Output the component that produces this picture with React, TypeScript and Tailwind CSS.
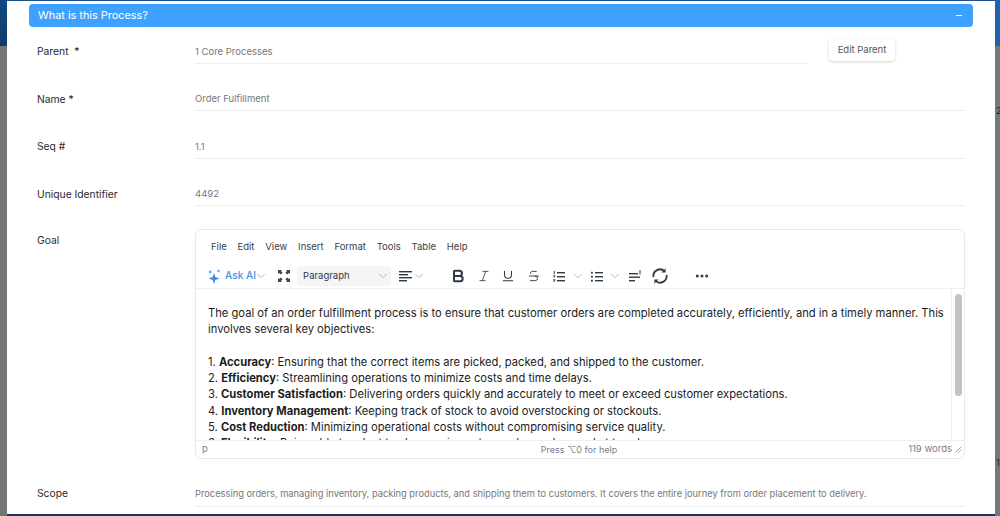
import {
  Bold,
  ChevronDown,
  Ellipsis,
  Italic,
  Strikethrough,
  Underline,
} from "lucide-react";

const menuItems = ["File", "Edit", "View", "Insert", "Format", "Tools", "Table", "Help"];

const Sparkle = () => (
  <svg width="14" height="15" viewBox="0 0 14 15" fill="#3f8fe8">
    <path d="M6 4 L7.4 8.1 L11.5 9.5 L7.4 10.9 L6 15 L4.6 10.9 L.5 9.5 L4.6 8.1 Z" />
    <path d="M2.2 .8 L2.8 2.4 L4.4 3 L2.8 3.6 L2.2 5.2 L1.6 3.6 L0 3 L1.6 2.4 Z" />
    <path d="M10.5 0 L11 1.5 L12.5 2 L11 2.5 L10.5 4 L10 2.5 L8.5 2 L10 1.5 Z" />
  </svg>
);

const Fullscreen = () => (
  <svg width="12" height="12" viewBox="0 0 13 13" fill="#3b4652">
    <path d="M0 0h4.4L3.2 1.2 5 3 3 5 1.2 3.2 0 4.4Z" />
    <path d="M13 0v4.4L11.8 3.2 10 5 8 3 9.8 1.2 8.6 0Z" />
    <path d="M0 13V8.6l1.2 1.2L3 8l2 2-1.8 1.8L4.4 13Z" />
    <path d="M13 13H8.6l1.2-1.2L8 10l2-2 1.8 1.8L13 8.6Z" />
  </svg>
);

const AlignLeft = () => (
  <svg width="13" height="11" viewBox="0 0 13 11" fill="#2f3a45">
    <rect width="13" height="1.4" />
    <rect y="3" width="9" height="1.4" />
    <rect y="6" width="13" height="1.4" />
    <rect y="9" width="8" height="1.4" />
  </svg>
);

const NumList = () => (
  <svg width="12" height="11" viewBox="0 0 12 11" fill="#2f3a45">
    <rect x="4" y="1" width="8" height="1.4" />
    <rect x="4" y="5" width="8" height="1.4" />
    <rect x="4" y="9" width="8" height="1.4" />
    <rect x="0.8" y="0" width="1" height="3" />
    <rect x="0.3" y="4" width="2" height="2.4" opacity=".7" />
    <rect x="0.3" y="8" width="2" height="2.8" opacity=".7" />
  </svg>
);

const BulletList = () => (
  <svg width="12" height="11" viewBox="0 0 12 11" fill="#2f3a45">
    <rect x="4" y="1" width="8" height="1.4" />
    <rect x="4" y="5" width="8" height="1.4" />
    <rect x="4" y="9" width="8" height="1.4" />
    <rect x="0" y="0.8" width="1.8" height="1.8" />
    <rect x="0" y="4.8" width="1.8" height="1.8" />
    <rect x="0" y="8.8" width="1.8" height="1.8" />
  </svg>
);

const Footnote = () => (
  <svg width="13" height="12" viewBox="0 0 13 12" fill="#2f3a45">
    <rect y="3" width="9" height="1.4" />
    <rect y="6.5" width="11" height="1.4" />
    <rect y="10" width="6" height="1.4" />
    <rect x="10.5" y="0" width="1" height="4.5" />
  </svg>
);

const Sync = () => (
  <svg width="16" height="16" viewBox="0 0 16 16" fill="none" stroke="#2f3a45" strokeWidth="1.8">
    <path d="M1.5 9 A6.5 6.5 0 0 1 12.6 3.4" />
    <path d="M14.5 7 A6.5 6.5 0 0 1 3.4 12.6" />
    <path d="M13.6 .4 V4.6 H9.4 Z" fill="#2f3a45" stroke="none" />
    <path d="M2.4 15.6 V11.4 H6.6 Z" fill="#2f3a45" stroke="none" />
  </svg>
);

const Resize = () => (
  <svg width="7" height="7" viewBox="0 0 7 7" stroke="#8a8f96" strokeWidth=".8">
    <path d="M0.5 6.5 L6.5 0.5 M3.5 6.5 L6.5 3.5" />
  </svg>
);

const Chevron = () => <ChevronDown size={14} strokeWidth={1.1} className="shrink-0 text-[#8b939c]" />;

const Field = ({ label, value }: { label: string; value: string }) => (
  <div className="flex h-[24.5px]">
    <p className="w-[158px] pt-[5px] text-[10.3px] leading-[14px] text-[#2a2a2a]">{label}</p>
    <p className="flex-1 border-b border-[#eeeeee] pt-[5.5px] text-[9.5px] leading-[14px] text-[#777777]">
      {value}
    </p>
  </div>
);

const App = () => {
  return (
    <div className="flex h-[516px] w-[1000px] overflow-hidden font-['Inter',sans-serif]">
      {/* backdrop left */}
      <div className="flex w-[7px] flex-col">
        <div className="h-[46px] bg-gradient-to-b from-[#0b4a86] to-[#123a68]"></div>
        <div className="flex-1 bg-[#757678]"></div>
      </div>

      <div className="flex flex-1 flex-col">
        <div className="h-px bg-[#1d4f8c]"></div>
        <div className="flex-1 overflow-hidden bg-white pl-[22px] pr-[22px] pt-[3px]">
          {/* accordion header */}
          <div className="flex h-[23px] items-center justify-between rounded-[4px] bg-[#3ea1ff] pl-[9px] pr-[11px] text-white">
            <p className="text-[10.9px]">What is this Process?</p>
            <div className="h-px w-[6px] bg-white"></div>
          </div>

          <div className="mt-[12px] flex flex-col gap-[23px] pl-2 pr-2">
            <div className="flex h-[24.5px]">
              <p className="w-[158px] pt-[5px] text-[10.3px] leading-[14px] text-[#2a2a2a]">Parent&nbsp; *</p>
              <p className="w-[613px] border-b border-[#eeeeee] pt-[5.5px] text-[9.5px] leading-[14px] text-[#777777]">
                1 Core Processes
              </p>
              <button className="ml-[21px] h-[22px] w-[66px] rounded-[4px] bg-white text-[9.5px] text-[#555555] shadow-[0_1px_3px_rgba(0,0,0,0.18)]">
                Edit Parent
              </button>
            </div>
            <Field label="Name *" value="Order Fulfillment" />
            <Field label="Seq #" value="1.1" />
            <Field label="Unique Identifier" value="4492" />

            <div className="flex">
              <p className="w-[158px] pt-[4px] text-[10.3px] leading-[14px] text-[#2a2a2a]">Goal</p>
              {/* editor */}
              <div className="flex h-[230px] flex-1 flex-col overflow-hidden rounded-[6px] border border-[#e9e9e9]">
                <div className="flex h-[59px] flex-col border-b border-[#f0f0f0]">
                  <div className="flex gap-[10.8px] pl-[15px] pt-[10px] text-[9.5px] leading-[14px] text-[#3a4149]">
                    {menuItems.map((item) => (
                      <span key={item}>{item}</span>
                    ))}
                  </div>
                  <div className="mt-[12px] flex h-[20px] items-center pl-[12px] text-[#2f3a45]">
                    <Sparkle />
                    <span className="ml-[3px] text-[10.2px] font-medium text-[#4a90e2]">Ask AI</span>
                    <span className="-ml-[2px]">
                      <Chevron />
                    </span>
                    <span className="ml-[10px]">
                      <Fullscreen />
                    </span>
                    <div className="ml-[7px] flex h-[20px] w-[94px] items-center justify-between rounded-[3px] bg-[#f4f5f6] pl-[6px] pr-px text-[9.5px]">
                      Paragraph
                      <Chevron />
                    </div>
                    <span className="ml-[8px]">
                      <AlignLeft />
                    </span>
                    <Chevron />
                    <Bold size={16} strokeWidth={3} className="ml-[24px]" />
                    <Italic size={14} strokeWidth={1.4} className="ml-[11px]" />
                    <Underline size={14} strokeWidth={1.8} className="ml-[10px]" />
                    <Strikethrough size={14} strokeWidth={1.6} className="ml-[12px]" />
                    <span className="ml-[12px]">
                      <NumList />
                    </span>
                    <span className="ml-[6px]">
                      <Chevron />
                    </span>
                    <span className="ml-[6px]">
                      <BulletList />
                    </span>
                    <span className="ml-[4.5px]">
                      <Chevron />
                    </span>
                    <span className="ml-[7.5px]">
                      <Footnote />
                    </span>
                    <span className="ml-[10px]">
                      <Sync />
                    </span>
                    <Ellipsis size={16} strokeWidth={2.6} className="ml-[26px]" />
                  </div>
                </div>

                <div className="flex h-[152px] border-b border-[#eeeeee]">
                  <div className="h-full flex-1 overflow-hidden pl-3 pt-[16px] text-[11.2px] leading-[16.25px] text-[#1c1c1c]">
                    <p>
                      The goal of an order fulfillment process is to ensure that customer orders are completed accurately, efficiently, and in a timely manner. This involves several key objectives:
                    </p>
                    <br />
                    <p>
                      1. <b>Accuracy</b>: Ensuring that the correct items are picked, packed, and shipped to the customer.
                    </p>
                    <p>
                      2. <b>Efficiency</b>: Streamlining operations to minimize costs and time delays.
                    </p>
                    <p>
                      3. <b>Customer Satisfaction</b>: Delivering orders quickly and accurately to meet or exceed customer expectations.
                    </p>
                    <p>
                      4. <b>Inventory Management</b>: Keeping track of stock to avoid overstocking or stockouts.
                    </p>
                    <p>
                      5. <b>Cost Reduction</b>: Minimizing operational costs without compromising service quality.
                    </p>
                    <p>
                      6. <b>Flexibility</b>: Being able to adapt to changes in customer demand or market trends.
                    </p>
                  </div>
                  <div className="h-full w-[13px] shrink-0 border-l border-[#f0f0f0] pl-[3px] pt-[5px]">
                    <div className="h-[102px] w-[7px] rounded-full bg-[#c2c2c2]"></div>
                  </div>
                </div>

                <div className="flex flex-1 items-center justify-between pl-[6px] pr-[2px] text-[9.5px] text-[#7b8087]">
                  <span className="w-[117px]">p</span>
                  <span className="text-[9px]">Press ⌥0 for help</span>
                  <span className="flex w-[123px] items-center justify-end gap-[3px]">
                    119 words
                    <Resize />
                  </span>
                </div>
              </div>
            </div>

            <div className="flex h-[24.5px]">
              <p className="w-[158px] pt-[4px] text-[10.3px] leading-[14px] text-[#2a2a2a]">Scope</p>
              <p className="flex-1 border-b border-[#eeeeee] pt-[5px] text-[9.3px] leading-[14px] text-[#777777]">
                Processing orders, managing inventory, packing products, and shipping them to customers. It covers the entire journey from order placement to delivery.
              </p>
            </div>
          </div>
        </div>
        <div className="h-[2px] bg-[#1b3560]"></div>
      </div>

      {/* backdrop right */}
      <div className="flex w-[5px] flex-col">
        <div className="h-[46px] bg-[#1c62ad]"></div>
        <div className="flex-1 overflow-hidden bg-[#777777] pl-px text-[9px] leading-[10px] text-[#222222]">
          <p className="pt-[60px]">2</p>
          <p className="pt-[342px]">1,</p>
        </div>
      </div>
    </div>
  );
};

export default App;
